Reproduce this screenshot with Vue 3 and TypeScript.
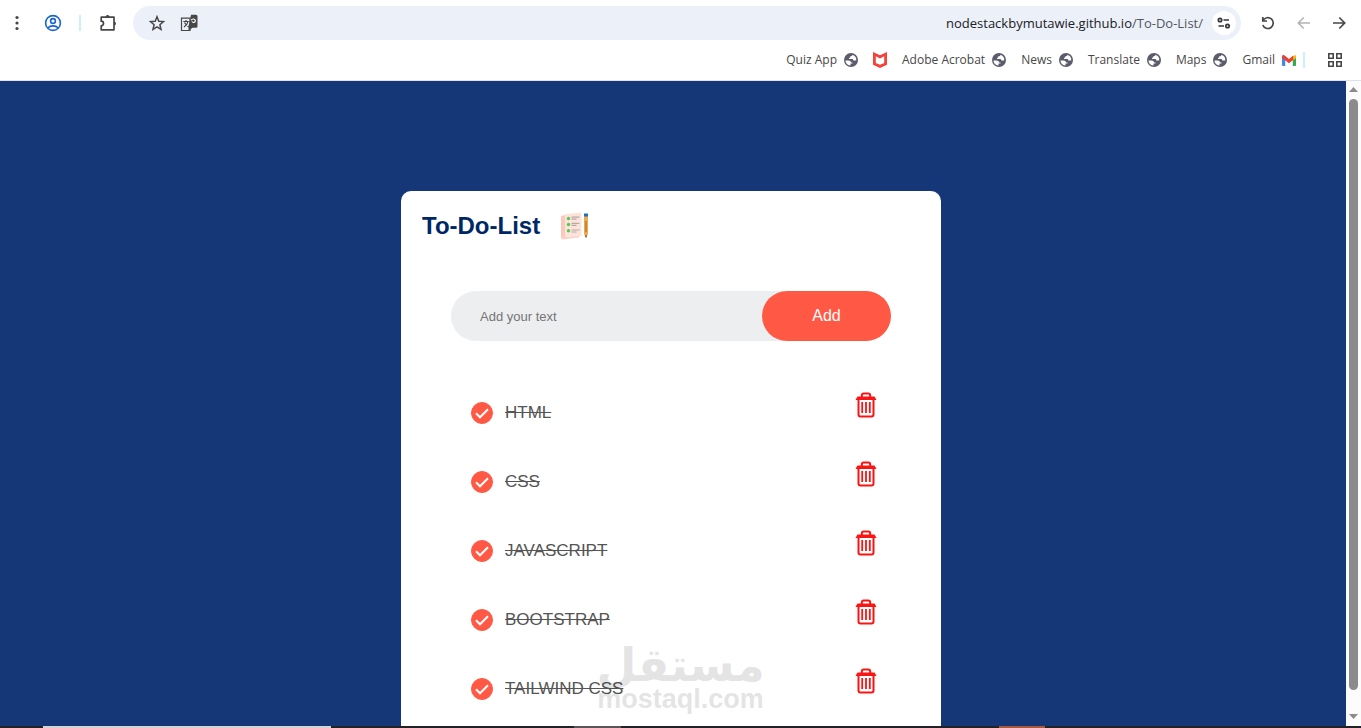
<script setup lang="ts">
import { ref } from 'vue'

interface Task {
  id: number
  title: string
  done: boolean
}

interface Bookmark {
  label: string
  icon: 'globe' | 'shield' | 'gmail'
}

const bookmarks: Bookmark[] = [
  { label: 'Quiz App', icon: 'globe' },
  { label: '', icon: 'shield' },
  { label: 'Adobe Acrobat', icon: 'globe' },
  { label: 'News', icon: 'globe' },
  { label: 'Translate', icon: 'globe' },
  { label: 'Maps', icon: 'globe' },
  { label: 'Gmail', icon: 'gmail' },
]

const tasks = ref<Task[]>(
  ['HTML', 'CSS', 'JAVASCRIPT', 'BOOTSTRAP', 'TAILWIND CSS'].map((title, id) => ({ id, title, done: true })),
)
const draft = ref('')
let nextId = tasks.value.length

function addTask() {
  const title = draft.value.trim()
  if (!title) return
  tasks.value.push({ id: nextId++, title, done: false })
  draft.value = ''
}

function removeTask(id: number) {
  tasks.value = tasks.value.filter((task) => task.id !== id)
}
</script>

<template>
  <div class="window">
    <header class="chrome">
      <div class="toolbar">
        <button class="tool menu" type="button" aria-label="Menu">
          <svg width="18" height="18" viewBox="0 0 18 18" fill="#474747">
            <circle cx="9" cy="3.5" r="1.6" /><circle cx="9" cy="9" r="1.6" /><circle cx="9" cy="14.5" r="1.6" />
          </svg>
        </button>
        <button class="tool profile" type="button" aria-label="Profile">
          <svg width="18" height="18" viewBox="0 0 18 18" fill="none" stroke="#1b66c9" stroke-width="1.6">
            <circle cx="9" cy="9" r="7.4" /><circle cx="9" cy="7" r="2.4" />
            <path d="M3.8 14c1.4-1.5 3.2-2.1 5.2-2.1s3.8.6 5.2 2.1" />
          </svg>
        </button>
        <span class="divider"></span>
        <button class="tool extensions" type="button" aria-label="Extensions">
          <svg width="18" height="18" viewBox="0 0 18 18">
            <path d="M2.2 3.2H15v12.600H2.200v-4a2.300 2.300 0 0 0 0-4.600z" fill="none" stroke="#474747" stroke-width="1.7" stroke-linejoin="round" />
            <path d="M6.600 3a2 2 0 0 1 4 0zM15 7.400a2 2 0 0 1 0 4z" fill="#474747" />
          </svg>
        </button>
        <div class="address">
          <button class="tool" type="button" aria-label="Bookmark this page">
            <svg width="18" height="18" viewBox="0 0 18 18" fill="none" stroke="#474747" stroke-width="1.5">
              <path d="M9 2.800l1.800 4.400 4.700.400-3.600 3.100 1.100 4.600L9 12.800l-4 2.500 1.100-4.600-3.600-3.100 4.700-.400z" />
            </svg>
          </button>
          <button class="tool" type="button" aria-label="Translate this page">
            <svg width="18" height="18" viewBox="0 0 18 18">
              <path d="M1.500 4.200H10v12.300H1.500zM3.300 7.500h5.500M6 6v1.500M8 7.500c-.5 2.500-2 4.300-4 5.500M4.500 8.500c1 2 2.500 3.300 4.500 4.500" fill="none" stroke="#474747" stroke-width="1.2" />
              <path d="M11 .8h5a1.500 1.500 0 0 1 1.500 1.500v10a1.500 1.500 0 0 1-1.500 1.500h-3.500l-4 3V12l1-4z" fill="#474747" />
              <path d="M11 6.300c1-1.800 4-1.800 4.300.3.200 2-2.600 2.600-3.300.8" fill="none" stroke="#fff" stroke-width="1.2" />
            </svg>
          </button>
          <a class="url" href="#"><span class="host">nodestackbymutawie.github.io</span>/To-Do-List/</a>
          <button class="tool site-info" type="button" aria-label="View site information">
            <svg width="14" height="14" viewBox="0 0 14 14" fill="none" stroke="#34343c" stroke-width="1.7">
              <circle cx="3" cy="4" r="1.7" /><path d="M6.500 4H12M1.500 10H7" /><circle cx="10.500" cy="10" r="1.7" />
            </svg>
          </button>
        </div>
        <button class="tool reload" type="button" aria-label="Reload">
          <svg width="18" height="18" viewBox="0 0 18 18" fill="none" stroke="#474747" stroke-width="1.7">
            <path d="M3.800 3v4H8M4 6.700a5.400 5.400 0 1 1-.2 4.300" />
          </svg>
        </button>
        <button class="tool back" type="button" aria-label="Forward" disabled>
          <svg width="18" height="18" viewBox="0 0 18 18" fill="none" stroke="#b2b2b5" stroke-width="1.5">
            <path d="M15 9H3.500M8.700 3.500L3.300 9l5.400 5.500" />
          </svg>
        </button>
        <button class="tool" type="button" aria-label="Back">
          <svg width="18" height="18" viewBox="0 0 18 18" fill="none" stroke="#474747" stroke-width="1.7">
            <path d="M3 9h11.500M9.300 3.500L14.700 9l-5.400 5.500" />
          </svg>
        </button>
      </div>

      <nav class="bookmarks" aria-label="Bookmarks">
        <a v-for="mark in bookmarks" :key="mark.icon + mark.label" class="bookmark" href="#" :aria-label="mark.label || 'McAfee'">
          <span v-if="mark.label">{{ mark.label }}</span>
          <svg v-if="mark.icon === 'globe'" width="14" height="14" viewBox="0 0 14 14">
            <circle cx="7" cy="7" r="7" fill="#5b5b6b" />
            <path d="M1.500 7.500h3c1.500 0 2.500.8 2.500 2h1.500v1H6.500v2C3.500 12.300 1.500 10 1.500 7.500zM8.500 1.700c-.2 1.300-.8 1.600-2.300 1.600v1.400H5v1.200h3c1 0 1.300.6 1.300 1.500h2.900c.5-2.500-1-4.800-3.700-5.700z" fill="#fff" />
          </svg>
          <svg v-else-if="mark.icon === 'shield'" width="14" height="16" viewBox="0 0 14 16">
            <path d="M0 0l7 3.300L14 0v12.700L7 16l-7-3.300zM2.800 4.200v6.700L7 12.800l4.200-1.900V4.200L7 6.400z" fill="#f5413a" fill-rule="evenodd" />
          </svg>
          <svg v-else width="14" height="11" viewBox="0 0 14 11">
            <path d="M0 2l3.200 2.400V11H1a1 1 0 0 1-1-1z" fill="#4285f4" />
            <path d="M14 2l-3.200 2.400V11H13a1 1 0 0 0 1-1z" fill="#34a853" />
            <path d="M10.800 1.200L14 0v3l-3.200 2.400z" fill="#fbbc04" />
            <path d="M0 1.300C0 .1 1.400-.4 2.300.3L7 3.900 11.200.6v4.500L7 8.300 0 3z" fill="#ea4335" />
          </svg>
        </a>
        <span class="divider"></span>
        <button class="tool apps" type="button" aria-label="All bookmarks">
          <svg width="14" height="14" viewBox="0 0 14 14" fill="none" stroke="#474747" stroke-width="1.6">
            <path d="M.8.8h4.400v4.400H.8zM8.800.8h4.400v4.400H8.800zM.8 8.800h4.400v4.400H.8zM8.800 8.800h4.400v4.400H8.800z" />
          </svg>
        </button>
      </nav>
    </header>

    <div class="viewport">
      <main class="page">
        <section class="card">
          <h1 class="title">
            To-Do-List
            <svg width="30" height="28" viewBox="0 0 30 28">
              <path d="M1 4l4-1v22l-4 1.500z" fill="#fcc8bd" />
              <path d="M1 25l18-1v1.500L2 27.500z" fill="#fbd0c5" />
              <path d="M5 2l15-1.200c1 0 1.500.5 1.500 1.200v22L5 25z" fill="#fde3da" />
              <g fill="#4fcb51"><circle cx="8.500" cy="6.500" r="1.700" /><circle cx="8.500" cy="12.500" r="1.700" /><circle cx="8.500" cy="18.800" r="1.700" /></g>
              <path d="M11.500 5.200h8M11.500 7.200h5M11.500 11.300h8M11.500 13.300h5M11.500 18h8M11.500 20h5" stroke="#b5aaa9" stroke-width="1.2" />
              <path d="M24 4h4v18l-2 4-2-4z" fill="#edaa4c" /><path d="M26 9v11" stroke="#a36c31" />
              <path d="M24 1.500h4v3h-4z" fill="#1d70c9" /><path d="M25 23.500h2l-1 2.500z" fill="#453a56" />
            </svg>
          </h1>

          <form class="entry" @submit.prevent="addTask">
            <input v-model="draft" class="entry-text" type="text" placeholder="Add your text" aria-label="Add your text" />
            <button class="entry-add" type="submit">Add</button>
          </form>

          <ul class="tasks">
            <li v-for="task in tasks" :key="task.id" class="task">
              <label class="task-label">
                <span class="check">
                  <input v-model="task.done" type="checkbox" />
                  <svg width="22" height="22" viewBox="0 0 22 22" fill="none" stroke="#fff" stroke-width="2">
                    <path d="M5 11.300l4 4 8-8" />
                  </svg>
                </span>
                <span class="task-title" :class="{ done: task.done }">{{ task.title }}</span>
              </label>
              <button class="remove" type="button" :aria-label="'Delete ' + task.title" @click="removeTask(task.id)">
                <svg width="22" height="26" viewBox="0 0 22 26" fill="none" stroke="#fb1414" stroke-width="2">
                  <path d="M6.800 5V3.400a2 2 0 0 1 2-2h4.400a2 2 0 0 1 2 2V5" />
                  <path d="M3.500 8v14.500a2 2 0 0 0 2 2h11a2 2 0 0 0 2-2V8" />
                  <path d="M2.500 4.500h17L21.500 8H.5z" fill="#fb1414" stroke="none" />
                  <path d="M7.200 10v11M11 10v11M14.800 10v11" stroke-width="1.8" />
                </svg>
              </button>
            </li>
          </ul>
        </section>
      </main>

      <div class="scrollbar" aria-hidden="true">
        <svg width="9" height="5" viewBox="0 0 9 5" fill="#8b8b8b"><path d="M4.500 0L9 5H0z" /></svg>
        <span class="thumb"></span>
        <svg class="down" width="9" height="5" viewBox="0 0 9 5" fill="#8b8b8b"><path d="M0 0h9L4.500 5z" /></svg>
      </div>

      <div class="watermark">
        <span class="mark-ar" lang="ar" dir="rtl">مستقل</span>
        <span class="mark-en">mostaql.com</span>
      </div>
    </div>

    <footer class="taskbar"><span class="search"></span><span class="app-grey"></span><span class="app-orange"></span></footer>
  </div>
</template>

<style>
body {
  background: #153677;
}
</style>

<style scoped>
.window {
  display: flex;
  flex-direction: column;
  height: 100vh;
  overflow: hidden;
  font-family: "Liberation Sans", Arial, sans-serif;
}

.window * {
  box-sizing: border-box;
}

svg {
  display: block;
  flex: none;
}

button {
  border: 0;
  padding: 0;
  background: none;
  cursor: pointer;
}

.chrome {
  flex: none;
  background: #fff;
  border-bottom: 1px solid #dfe2e4;
  font-family: "Open Sans", "Noto Sans", sans-serif;
}

.toolbar {
  display: flex;
  align-items: center;
  height: 46px;
  padding: 0 13px 0 8px;
}

.tool {
  display: flex;
  flex: none;
  align-items: center;
  justify-content: center;
}

.profile {
  margin-left: 18px;
}

.divider {
  flex: none;
  width: 2px;
  height: 16px;
  background: #c9f1fa;
}

.toolbar .divider {
  margin-left: 17px;
}

.extensions {
  margin-left: 18px;
}

.address {
  display: flex;
  flex: 1;
  align-items: center;
  gap: 14px;
  height: 34px;
  margin: 0 18px 0 16px;
  padding: 0 5px 0 15px;
  border-radius: 17px;
  background: #ecf0f9;
}

.url {
  flex: 1;
  margin-right: -5px;
  color: #55575c;
  font-size: 13px;
  line-height: 20px;
  text-align: right;
  text-decoration: none;
  white-space: nowrap;
}

.host {
  color: #202124;
}

.site-info {
  width: 24px;
  height: 24px;
  border-radius: 50%;
  background: #fff;
}

.back {
  margin: 0 17px 0 18px;
}

.bookmarks {
  display: flex;
  align-items: center;
  justify-content: flex-end;
  height: 34px;
  padding: 0 19px 6px 8px;
}

.bookmark {
  display: flex;
  align-items: center;
  gap: 7px;
  margin-left: 15px;
  color: #474747;
  font-size: 12px;
  line-height: 18px;
  text-decoration: none;
  white-space: nowrap;
}

.bookmarks .divider {
  margin-left: 7px;
}

.apps {
  margin-left: 23px;
}

.viewport {
  position: relative;
  display: flex;
  flex: 1;
  min-height: 0;
}

.page {
  flex: 1;
  overflow: hidden;
  padding: 110px 14px 0 10px;
  background: #153677;
}

.card {
  width: 100%;
  max-width: 540px;
  margin: 0 auto;
  padding: 20px 21px 70px;
  border-radius: 10px;
  background: #fff;
}

.title {
  display: flex;
  align-items: center;
  gap: 20px;
  margin: 0 0 50px;
  color: #002765;
  font-size: 24px;
  line-height: 30px;
}

.entry {
  display: flex;
  margin: 0 29px 36px;
  border-radius: 25px;
  background: #edeef0;
}

.entry-text {
  flex: 1;
  min-width: 0;
  padding: 0 10px 0 29px;
  border: 0;
  outline: 0;
  background: transparent;
  font-family: inherit;
  font-size: 13px;
}

.entry-text::placeholder {
  color: #757575;
}

.entry-add {
  width: 129px;
  height: 50px;
  border-radius: 25px;
  background: #ff5945;
  color: #fff;
  font-family: inherit;
  font-size: 16px;
}

.tasks {
  margin: 0 43px 0 49px;
  padding: 0;
  list-style: none;
}

.task {
  display: flex;
  align-items: flex-start;
  justify-content: space-between;
  height: 69px;
  padding-top: 15px;
}

.task-label {
  display: flex;
  align-items: center;
  gap: 12px;
  padding-top: 10px;
  cursor: pointer;
}

.check {
  display: grid;
}

.check > * {
  grid-area: 1 / 1;
}

.check input {
  width: 22px;
  height: 22px;
  margin: 0;
  border: 1px solid #ff5945;
  border-radius: 50%;
  appearance: none;
}

.check input:checked {
  background: #ff5945;
}

.check svg {
  pointer-events: none;
}

.task-title {
  color: #555;
  font-size: 17px;
  line-height: 20px;
}

.task-title.done {
  text-decoration: line-through;
}

.remove {
  flex: none;
}

.scrollbar {
  display: flex;
  flex: none;
  flex-direction: column;
  align-items: center;
  gap: 7px;
  width: 15px;
  padding: 6px 0 7px;
  background: #fcfcfc;
}

.thumb {
  flex: 1;
  width: 9px;
  border-radius: 5px;
  background: #8b8b8b;
}

.down {
  margin-top: 17px;
}

.watermark {
  position: absolute;
  bottom: 12px;
  left: 50%;
  display: flex;
  flex-direction: column;
  align-items: center;
  width: 164px;
  margin-left: -82px;
  color: #000;
  opacity: 0.1;
  pointer-events: none;
}

.mark-ar {
  margin-bottom: -6px;
  font-family: "DejaVu Sans", sans-serif;
  font-size: 46px;
  font-weight: 700;
  line-height: 50px;
}

.mark-en {
  font-size: 27px;
  font-weight: 700;
  line-height: 30px;
}

.taskbar {
  display: flex;
  flex: none;
  height: 2px;
  padding-left: 43px;
  background: #232126;
}

.search {
  width: 288px;
  background: #d4d4d4;
}

.app-grey {
  width: 47px;
  margin-left: 243px;
  background: #5d5455;
}

.app-orange {
  width: 46px;
  margin-left: 378px;
  background: #a8583c;
}
</style>
